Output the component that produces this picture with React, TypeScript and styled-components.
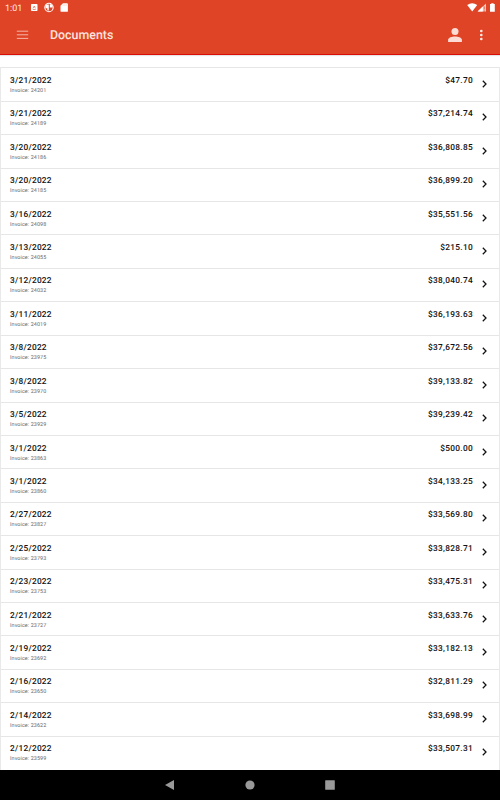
import React from "react";
import styled, { createGlobalStyle } from "styled-components";

const GlobalStyle = createGlobalStyle`
  * { box-sizing: border-box; }
  body { margin: 0; background: #fff; overflow: hidden; font-family: Roboto, "Liberation Sans", sans-serif; text-rendering: geometricPrecision; }
`;

const Screen = styled.div`
  width: 500px;
  height: 800px;
  display: flex;
  flex-direction: column;
  overflow: hidden;
  background: #fff;
`;

const Header = styled.header`
  flex: none;
  height: 55px;
  background: #df4427;
  border-bottom: 1px solid #dc0d08;
  box-shadow: 0 1px 1px rgba(0, 0, 0, 0.1);
  color: #fff;
`;

const StatusBar = styled.div`
  height: 16px;
  padding: 0 4px 0 5px;
  display: flex;
  align-items: center;
`;

const Clock = styled.span`
  width: 25px;
  padding-top: 1px;
  font-size: 9px;
  line-height: 16px;
  letter-spacing: 0;
  color: #ffe9e4;
`;

const StatusIcons = styled.svg`
  display: block;
  height: 16px;
`;

const SignalIcons = styled(StatusIcons)`
  margin-left: auto;
`;

const AppBar = styled.div`
  height: 38px;
  padding: 0 12px 0 16px;
  display: flex;
  align-items: center;
`;

const Title = styled.h1`
  margin: 2px 0 0 21px;
  flex: 1;
  font-size: 12.4px;
  font-weight: 500;
  line-height: 16px;
  color: #fde4df;
`;

const BarIcon = styled.svg<{ $gap?: number }>`
  display: block;
  margin-left: ${(p) => p.$gap ?? 0}px;
`;

const List = styled.main`
  flex: 1;
  min-height: 0;
  margin-top: 12.3px;
  overflow: hidden;
  border: solid #e9e9e9;
  border-width: 0 1px;
`;

const Row = styled.div`
  height: 33.43px;
  padding: 0 9px;
  display: flex;
  border-top: 1px solid #e6e6e6;
`;

const Info = styled.div`
  flex: 1;
  padding-top: 7.6px;
`;

const Strong = styled.div`
  font-size: 8.3px;
  font-weight: 500;
  line-height: 10px;
  letter-spacing: 0.26px;
  color: #111;
`;

const Invoice = styled.div`
  margin-top: 2px;
  font-size: 5.4px;
  line-height: 7px;
  letter-spacing: 0.1px;
  color: #666;
`;

const Amount = styled(Strong)`
  padding-top: 7.6px;
  margin-right: 8px;
  letter-spacing: 0.31px;
`;

const Chevron = styled.svg`
  display: block;
  margin-top: 10.6px;
`;

const NavBar = styled.nav`
  flex: none;
  height: 30px;
  background: #000;
  display: flex;
  align-items: center;
  justify-content: center;
  gap: 70px;
`;

const documents: [string, string, string][] = [
  ["3/21/2022", "24201", "$47.70"],
  ["3/21/2022", "24189", "$37,214.74"],
  ["3/20/2022", "24186", "$36,808.85"],
  ["3/20/2022", "24185", "$36,899.20"],
  ["3/16/2022", "24098", "$35,551.56"],
  ["3/13/2022", "24055", "$215.10"],
  ["3/12/2022", "24032", "$38,040.74"],
  ["3/11/2022", "24019", "$36,193.63"],
  ["3/8/2022", "23975", "$37,672.56"],
  ["3/8/2022", "23970", "$39,133.82"],
  ["3/5/2022", "23929", "$39,239.42"],
  ["3/1/2022", "23863", "$500.00"],
  ["3/1/2022", "23860", "$34,133.25"],
  ["2/27/2022", "23827", "$33,569.80"],
  ["2/25/2022", "23793", "$33,828.71"],
  ["2/23/2022", "23753", "$33,475.31"],
  ["2/21/2022", "23727", "$33,633.76"],
  ["2/19/2022", "23692", "$33,182.13"],
  ["2/16/2022", "23650", "$32,811.29"],
  ["2/14/2022", "23622", "$33,698.99"],
  ["2/12/2022", "23599", "$33,507.31"],
];

export default function App() {
  return (
    <>
      <GlobalStyle />
      <Screen>
        <Header>
          <StatusBar>
            <Clock>1:01</Clock>
            <StatusIcons width="42" height="16" viewBox="30 0 42 16">
              <rect x="31" y="4" width="6.5" height="7" rx="0.8" fill="#fff" />
              <path d="M33 8.4 34.2 6l1.2 2.4M32.8 9.5h2.9" stroke="#df4427" strokeWidth="0.6" fill="none" />
              <circle cx="49" cy="7.5" r="4.2" fill="none" stroke="#fff" strokeWidth="1.1" />
              <path d="M45.5 4.5h3.3v6h-1.5V8.2h-1.8zM49.8 4.2h1.8a3.4 3.4 0 0 1 1 3.2h-2.8z" fill="#fff" />
              <path d="M60.5 5.8 63 3.3h4a.9.9 0 0 1 .9.9v6.7a.9.9 0 0 1-.9.9h-5.6a.9.9 0 0 1-.9-.9z" fill="#fff" />
              <path d="M63.2 4.4v1.3M64.7 4.4v1.3M66.2 4.4v1.3" stroke="#f2b1a3" strokeWidth="0.6" />
            </StatusIcons>
            <SignalIcons width="30" height="16" viewBox="466 0 30 16">
              <path d="M467.2 5.1q5-3.6 10 0l-5 6.5z" fill="#fff" />
              <path d="M486 3.4v8.2h-8.4z" fill="#f7c8be" />
              <path d="M482.8 6.5v5.1h-5.2z" fill="#fff" />
              <path d="M484.2 6.4v3.2M484.2 10.4v1.2" stroke="#df4427" strokeWidth="0.8" />
              <path d="M491.2 3.2h2.4v.9h1.2v7.7H490V4.1h1.2z" fill="#fff" />
            </SignalIcons>
          </StatusBar>
          <AppBar>
            <BarIcon width="13" height="12" viewBox="0 0 13 12">
              <path d="M.8 2.2h11.4M.8 5.8h11.4M.8 9.4h11.4" stroke="#f5b4a6" strokeWidth="1" />
            </BarIcon>
            <Title>Documents</Title>
            <BarIcon width="15" height="16" viewBox="0 0 15 16">
              <circle cx="7" cy="4.6" r="3.5" fill="#fddbd5" />
              <path d="M.1 15v-2.1C.1 10.6 4 9.5 7 9.5s6.9 1.1 6.9 3.4V15z" fill="#fddbd5" />
            </BarIcon>
            <BarIcon $gap={15} width="10" height="14" viewBox="0 0 10 14">
              <g fill="#fde6e1">
                <circle cx="3.3" cy="3" r="1.35" />
                <circle cx="3.3" cy="7" r="1.35" />
                <circle cx="3.3" cy="11" r="1.35" />
              </g>
            </BarIcon>
          </AppBar>
        </Header>
        <List>
          {documents.map(([date, id, amount]) => (
            <Row key={id}>
              <Info>
                <Strong>{date}</Strong>
                <Invoice>Invoice: {id}</Invoice>
              </Info>
              <Amount>{amount}</Amount>
              <Chevron width="9" height="10" viewBox="0 0 9 10">
                <path d="M1.8 1.8 5 5 1.8 8.2" fill="none" stroke="#111" strokeWidth="1.25" />
              </Chevron>
            </Row>
          ))}
        </List>
        <NavBar>
          <svg width="10" height="10" viewBox="0 0 10 10">
            <path d="M9 0v10L0 5z" fill="#999" />
          </svg>
          <svg width="10" height="10" viewBox="0 0 10 10">
            <circle cx="5" cy="5" r="4.6" fill="#999" />
          </svg>
          <svg width="10" height="10" viewBox="0 0 10 10">
            <rect x="0.2" y="0.2" width="9.6" height="9.6" rx="0.5" fill="#999" />
          </svg>
        </NavBar>
      </Screen>
    </>
  );
}
